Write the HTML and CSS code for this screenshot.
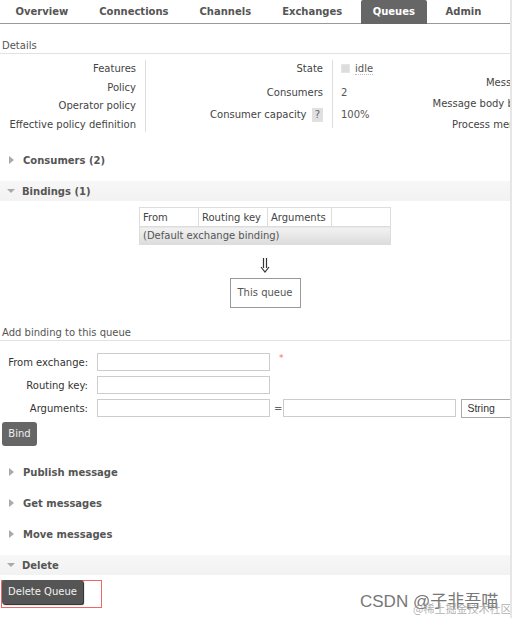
FILE: index.html
```html
<!DOCTYPE html>
<html>
<head>
<meta charset="utf-8">
<link rel="stylesheet" href="styles.css">
</head>
<body>
<div class="page">
  <div class="nav">
    <span class="tab">Overview</span>
    <span class="tab">Connections</span>
    <span class="tab">Channels</span>
    <span class="tab">Exchanges</span>
    <span class="tab active">Queues</span>
    <span class="tab last">Admin</span>
  </div>

  <div class="subhead">Details</div>

  <div class="details">
    <div class="dgroup g1">
      <div class="dlabels">
        <div class="drow">Features</div>
        <div class="drow">Policy</div>
        <div class="drow">Operator policy</div>
        <div class="drow">Effective policy definition</div>
      </div>
    </div>
    <div class="dgroup g2">
      <div class="dlabels">
        <div class="drow r1">State</div>
        <div class="drow r2">Consumers</div>
        <div class="drow r3">Consumer capacity <span class="help">?</span></div>
      </div>
      <div class="dvalues">
        <div class="drow r1"><span class="chk"></span><span class="idle">idle</span></div>
        <div class="drow r2">2</div>
        <div class="drow r3">100%</div>
      </div>
    </div>
    <div class="dgroup g3">
      <div class="dlabels">
        <div class="drow">Messages</div>
        <div class="drow">Message body bytes</div>
        <div class="drow">Process memory</div>
      </div>
    </div>
  </div>

  <div class="section"><span class="tri right"></span>Consumers (2)</div>
  <div class="section open"><span class="tri down"></span>Bindings (1)</div>

  <div class="bindings">
    <table class="btable">
      <tr class="bhead"><td class="c1">From</td><td class="c2">Routing key</td><td class="c3">Arguments</td><td class="c4"></td></tr>
      <tr class="brow"><td colspan="4">(Default exchange binding)</td></tr>
    </table>
    <svg class="arrow" width="10" height="15" viewBox="0 0 10 15">
      <path d="M3.5 0 V10 M6.5 0 V10 M1 9 L5 14 L9 9" fill="none" stroke="#333" stroke-width="1.2"/>
    </svg>
    <div class="thisq">This queue</div>
  </div>

  <div class="subhead add">Add binding to this queue</div>

  <div class="form">
    <div class="frow">
      <label class="flabel">From exchange:</label>
      <span class="input w1"></span>
      <span class="req">*</span>
    </div>
    <div class="frow">
      <label class="flabel">Routing key:</label>
      <span class="input w1"></span>
    </div>
    <div class="frow">
      <label class="flabel">Arguments:</label>
      <span class="input w1"></span>
      <span class="eq">=</span>
      <span class="input w2"></span>
      <span class="select">String</span>
    </div>
  </div>
  <div class="bindbtn">Bind</div>

  <div class="section s-pub"><span class="tri right"></span>Publish message</div>
  <div class="section"><span class="tri right"></span>Get messages</div>
  <div class="section"><span class="tri right"></span>Move messages</div>
  <div class="section open"><span class="tri down"></span>Delete</div>

  <div class="delwrap">
    <div class="delbtn">Delete Queue</div>
    <div class="redbox"></div>
    <div class="wm">CSDN @子非吾喵</div>
    <div class="wm2">@稀土掘金技术社区</div>
  </div>
</div>
</body>
</html>
```

FILE: styles.css
```css
html, body {
  margin: 0;
  padding: 0;
  background: #fff;
}
body {
  width: 512px;
  height: 618px;
  overflow: hidden;
  font-family: "DejaVu Sans", Verdana, sans-serif;
  font-size: 10px;
  color: #444;
}
.page {
  position: relative;
  width: 512px;
  height: 618px;
  border-right: 2px solid #e6e6e6;
  box-sizing: border-box;
  overflow: hidden;
}
.nav {
  display: flex;
  height: 24px;
  border-bottom: 1px solid #999;
  box-sizing: border-box;
}
.tab {
  flex: none;
  padding: 0 15.5px;
  font-weight: bold;
  color: #555;
  line-height: 23px;
  height: 23px;
  white-space: nowrap;
}
.tab.active {
  margin-left: 3px;
  background: #666;
  color: #fff;
  padding: 0 12px;
  border-radius: 2px 2px 0 0;
  height: 24px;
  margin-bottom: -1px;
}
.tab.last { margin-left: 3px; }
.subhead {
  color: #555;
  padding-left: 2px;
  margin-top: 14px;
  height: 15px;
  line-height: 15px;
  border-bottom: 1px solid #e2e2e2;
}
.details {
  display: flex;
  margin-top: 6px;
  height: 87px;
}
.dgroup { display: flex; flex: none; }
.dlabels { text-align: right; flex: none; }
.g1 { width: 146px; }
.g1 .dlabels {
  width: 136px;
  padding-right: 9px;
  border-right: 1px solid #ddd;
  height: 72px;
}
.drow { height: 18.5px; line-height: 18.5px; white-space: nowrap; }
.g2 { width: 200px; }
.g2 .dlabels {
  width: 177px;
  padding-right: 9px;
  border-right: 1px solid #ddd;
  height: 68px;
}
.g2 .r1 { height: 22px; line-height: 18px; }
.g2 .r2 { height: 22px; line-height: 22px; }
.g2 .r3 { height: 21px; line-height: 21px; }
.dvalues { flex: none; padding-left: 8px; color: #555; }
.chk {
  display: inline-block;
  width: 7px;
  height: 7px;
  background: #ddd;
  border: 1px solid #e5e5e5;
  margin-right: 5px;
  vertical-align: -1px;
}
.idle {
  border-bottom: 1px dotted #bbb;
}
.help {
  display: inline-block;
  background: #e0e0e0;
  color: #666;
  padding: 0 3px;
  line-height: 14px;
  margin-left: 2px;
}
.g3 { width: 210px; }
.g3 .dlabels {
  width: 189px;
  padding-top: 12px;
}
.g3 .drow { height: 21px; line-height: 21px; }
.section {
  display: flex;
  align-items: center;
  height: 20px;
  margin-top: 11px;
  font-weight: bold;
  color: #555;
  padding-left: 9px;
}
.details + .section { margin-top: 3px; }
.section.open {
  background: linear-gradient(#f7f7f7, #f2f2f2);
  padding-left: 7px;
}
.tri {
  display: inline-block;
  width: 0;
  height: 0;
  margin-right: 9px;
}
.tri.right {
  border-top: 4px solid transparent;
  border-bottom: 4px solid transparent;
  border-left: 5px solid #aaa;
}
.tri.down {
  border-left: 4.5px solid transparent;
  border-right: 4.5px solid transparent;
  border-top: 4px solid #aaa;
  margin-right: 7px;
}
.bindings {
  display: flex;
  flex-direction: column;
  align-items: center;
  padding-top: 6px;
  margin-left: 20px;
}
.btable {
  border-collapse: collapse;
  width: 252px;
  font-size: 10px;
  color: #444;
}
.btable td {
  border: 1px solid #ddd;
  padding: 0 3px;
  height: 17px;
  white-space: nowrap;
}
.bhead td { height: 18px; }
.btable .c1 { width: 52px; }
.btable .c2 { width: 62px; }
.btable .c3 { width: 57px; }
.brow td {
  background: linear-gradient(#f2f2f2, #dcdcdc);
  color: #555;
  border-color: #ddd;
}
.arrow {
  display: block;
  margin-top: 13px;
}
.thisq {
  margin-top: 5px;
  border: 1px solid #999;
  width: 71px;
  height: 30px;
  box-sizing: border-box;
  line-height: 28px;
  text-align: center;
  color: #555;
}
.subhead.add {
  margin-top: 17px;
}
.form {
  padding-top: 12px;
  display: flex;
  flex-direction: column;
  gap: 5px;
}
.frow {
  display: flex;
  align-items: center;
  height: 18px;
}
.flabel {
  flex: none;
  width: 88px;
  text-align: right;
  margin-right: 9px;
  color: #333;
}
.input {
  flex: none;
  display: inline-block;
  height: 18px;
  box-sizing: border-box;
  border: 1px solid #ccc;
  background: #fff;
}
.w1 { width: 173px; }
.w2 { width: 173px; }
.req {
  color: #f66;
  margin-left: 9px;
  align-self: flex-start;
  font-size: 9px;
}
.eq {
  flex: none;
  margin: 0 1px 0 4px;
  color: #666;
}
.select {
  flex: none;
  display: inline-block;
  margin-left: 5px;
  height: 19px;
  width: 60px;
  box-sizing: border-box;
  border: 1px solid #aaa;
  border-right: none;
  background: #fff;
  padding-left: 5px;
  line-height: 17px;
  font-family: "Liberation Sans", Arial, sans-serif;
  font-size: 10.5px;
  color: #333;
}
.bindbtn {
  margin: 5px 0 0 2px;
  width: 35px;
  height: 24px;
  line-height: 24px;
  background: #666;
  color: #f0f0f0;
  border-radius: 3px;
  text-align: center;
}
.section.s-pub { margin-top: 16px; }
.delwrap {
  position: relative;
  height: 60px;
}
.delbtn {
  margin: 5px 0 0 2px;
  width: 81px;
  height: 24px;
  line-height: 24px;
  background: #555;
  color: #f2f2f2;
  border-radius: 2px;
  box-shadow: 1px 1px 1px #222;
  text-align: center;
  position: relative;
  z-index: 1;
}
.redbox {
  position: absolute;
  left: 1px;
  top: 0;
  width: 101px;
  height: 28px;
  border: 1px solid #e66;
  box-sizing: border-box;
}
.wm {
  position: absolute;
  left: 360px;
  top: 12px;
  font-family: "Liberation Sans", "Noto Sans CJK SC", sans-serif;
  font-size: 17px;
  line-height: 20px;
  color: #777;
  white-space: nowrap;
}
.wm2 {
  position: absolute;
  left: 413px;
  top: 21px;
  font-family: "Noto Sans CJK SC", sans-serif;
  font-size: 11px;
  line-height: 14px;
  color: rgba(150,150,150,0.75);
  white-space: nowrap;
}
```
